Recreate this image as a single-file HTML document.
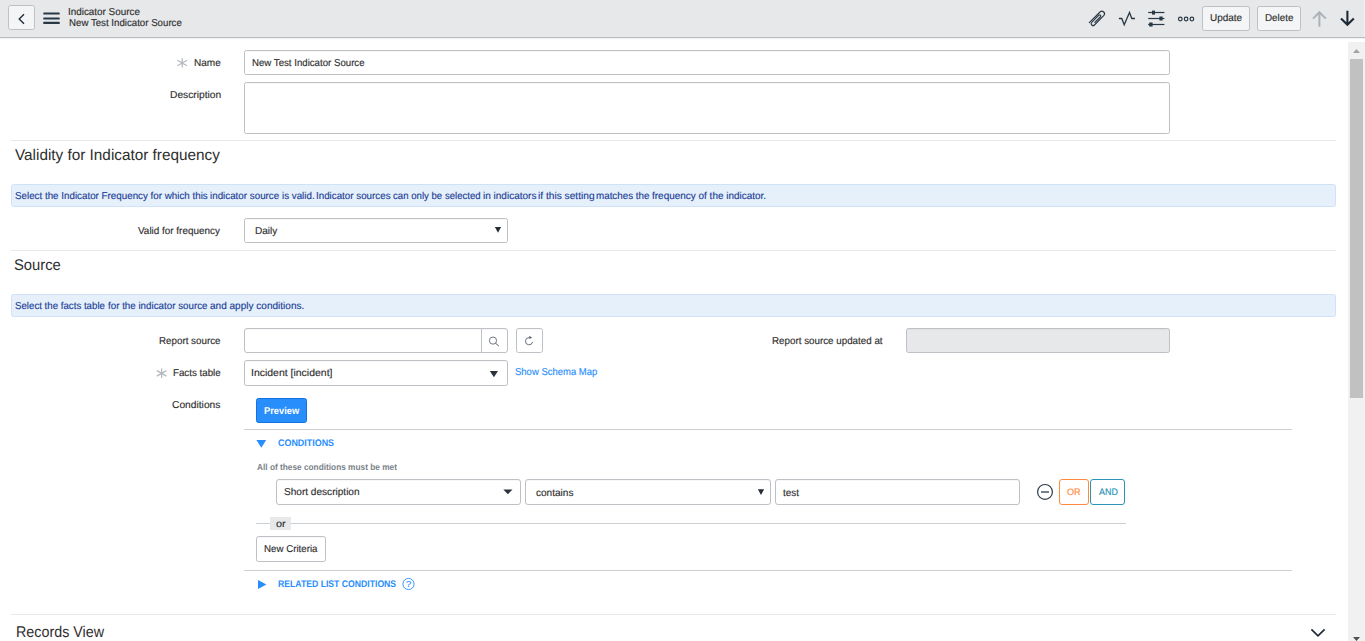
<!DOCTYPE html>
<html lang="en">
<head>
<meta charset="utf-8">
<title>Indicator Source | New Test Indicator Source</title>
<style>
html,body{margin:0;padding:0;}
body{position:relative;width:1365px;height:641px;overflow:hidden;background:#fff;font-family:"Liberation Sans",sans-serif;color:#2e2e2e;}
.t{position:absolute;text-rendering:geometricPrecision;white-space:pre;transform-origin:0 50%;display:block;}
.b{position:absolute;box-sizing:border-box;}
.hdr{left:0;top:0;width:1365px;height:38px;background:#e6e8ea;border-bottom:1px solid #b8bdc3;box-shadow:0 1px 1px rgba(0,0,0,.06);}
.btn{border:1px solid #bdc0c4;border-radius:2.5px;background:#f4f5f6;}
.inp{border:1px solid #bdc0c4;border-radius:2.5px;background:#fff;box-shadow:inset 0 1px 1px rgba(0,0,0,.035);}
.hr{height:1px;background:#e6e8ea;}
.hr2{height:1px;background:#cbd0d5;}
.info{border:1px solid #cfe2f8;border-radius:2.5px;background:#e6f0fa;}
svg{position:absolute;overflow:visible;}
.r{-webkit-text-stroke:.14px;}

</style>
</head>
<body>
<!-- header -->
<div class="b hdr"></div>
<div class="b" style="left:1364px;top:0;width:1px;height:37px;background:#eff0f2"></div>
<div class="b btn" style="left:8px;top:5px;width:27px;height:25px"></div>
<svg style="left:0;top:0" width="1365" height="38" viewBox="0 0 1365 38">
  <path d="M24 14.2 L19.2 19 L24 23.8" fill="none" stroke="#1f2f3f" stroke-width="1.4"/>
  <g fill="#293845">
    <rect x="43.3" y="12.4" width="16.4" height="2.2" rx=".5"/>
    <rect x="43.3" y="17.4" width="16.4" height="2.2" rx=".5"/>
    <rect x="43.3" y="21.8" width="16.4" height="2.2" rx=".5"/>
  </g>
</svg>
<div class="b btn" style="left:1202px;top:6px;width:48px;height:25px"></div>
<div class="b btn" style="left:1257px;top:6px;width:44px;height:25px"></div>

<!-- scrollbar -->
<div class="b" style="left:1348px;top:42px;width:17px;height:599px;background:#f1f1f1"></div>
<div class="b" style="left:1350px;top:59px;width:13px;height:339px;background:#c1c1c1"></div>
<svg style="left:1348px;top:42px" width="17" height="599" viewBox="0 0 17 599">
  <path d="M5 11 L8.5 7 L12 11 Z" fill="#a3a3a3"/>
  <path d="M5 595 L12 595 L8.5 599 Z" fill="#505050"/>
</svg>

<!-- form -->
<div class="b inp" style="left:244px;top:50px;width:926px;height:25px"></div>
<div class="b inp" style="left:244px;top:82px;width:926px;height:52px"></div>
<div class="b hr" style="left:11px;top:140px;width:1325px"></div>
<div class="b info" style="left:11px;top:184px;width:1325px;height:23px"></div>
<div class="b inp" style="left:244px;top:218px;width:264px;height:25px"></div>
<div class="b hr" style="left:11px;top:250px;width:1325px"></div>
<div class="b info" style="left:11px;top:294px;width:1325px;height:23px"></div>
<div class="b inp" style="left:244px;top:328px;width:238px;height:25px;border-radius:3px 0 0 3px"></div>
<div class="b inp" style="left:481px;top:328px;width:27px;height:25px;border-radius:0 3px 3px 0"></div>
<div class="b inp" style="left:516px;top:328px;width:27px;height:25px"></div>
<div class="b inp" style="left:906px;top:328px;width:264px;height:25px;background:#e6e8ea"></div>
<div class="b inp" style="left:244px;top:360px;width:264px;height:26px"></div>
<div class="b" style="left:256px;top:398px;width:51px;height:25px;border-radius:2.5px;background:#278efc;border:1px solid #1373e6"></div>
<div class="b hr2" style="left:244px;top:429px;width:1048px"></div>
<div class="b inp" style="left:276px;top:479px;width:245px;height:26px;border-radius:3px"></div>
<div class="b inp" style="left:525px;top:479px;width:246px;height:26px;border-radius:3px"></div>
<div class="b inp" style="left:775px;top:479px;width:245px;height:26px;border-radius:3px"></div>
<div class="b" style="left:1059px;top:479px;width:30px;height:26px;border:1px solid #ff8a3d;border-radius:3px;background:#fff"></div>
<div class="b" style="left:1090px;top:479px;width:35px;height:26px;border:1px solid #2a93b8;border-radius:3px;background:#fff"></div>
<div class="b hr2" style="left:256px;top:523px;width:870px"></div>
<div class="b" style="left:270px;top:517px;width:21px;height:13px;background:#e6e8ea"></div>
<div class="b inp" style="left:256px;top:536px;width:70px;height:26px"></div>
<div class="b hr2" style="left:244px;top:570px;width:1048px"></div>
<div class="b hr" style="left:11px;top:614px;width:1325px"></div>
<!-- icons -->
<svg style="left:0;top:0" width="1365" height="641" viewBox="0 0 1365 641">
  <!-- paperclip -->
  <g transform="translate(1097.4 18.3) rotate(45) scale(.9)" fill="none" stroke="#293845" stroke-width="1.25" stroke-linecap="round">
    <path d="M-2.9 9.8 V-7 A2.9 2.9 0 0 1 2.9 -7 V7.6 A2.1 2.1 0 0 1 -1.3 7.6 V-3.6 A1.25 1.25 0 0 1 1.2 -3.6 V5.2"/>
  </g>
  <!-- activity -->
  <path d="M1118.9 18.5 H1121.8 L1124.2 24.8 L1129.5 12.4 L1131.8 18.5 H1135" fill="none" stroke="#293845" stroke-width="1.3" stroke-linejoin="miter"/>
  <!-- sliders -->
  <g fill="#293845">
    <rect x="1148.2" y="11.9" width="16.2" height="1.2"/>
    <rect x="1148.2" y="17.9" width="16.2" height="1.2"/>
    <rect x="1148.2" y="23.9" width="16.2" height="1.2"/>
    <rect x="1152" y="10.6" width="3" height="4"/>
    <rect x="1159.4" y="16.5" width="3.2" height="4"/>
    <rect x="1149.2" y="22.5" width="3.4" height="4"/>
  </g>
  <!-- ooo -->
  <g fill="none" stroke="#293845" stroke-width="1.2">
    <circle cx="1180.3" cy="19" r="1.8"/>
    <circle cx="1186.1" cy="19" r="1.8"/>
    <circle cx="1191.9" cy="19" r="1.8"/>
  </g>
  <!-- up / down arrows -->
  <path d="M1319.4 26.7 V12.2 M1313 18.6 L1319.4 12.2 L1325.8 18.6" fill="none" stroke="#adb2b8" stroke-width="2"/>
  <path d="M1347.4 10.8 V24.8 M1341 18.4 L1347.4 24.8 L1353.8 18.4" fill="none" stroke="#1f2a37" stroke-width="2.1"/>

  <!-- mandatory asterisks -->
  <g stroke="#b4b9bf" stroke-width="1.25" fill="none">
    <path d="M182.2 58.2 V67.6 M177.4 60.2 L187 65.7 M187 60.2 L177.4 65.7"/>
    <path d="M161.6 368.6 V378 M156.8 370.6 L166.4 376.1 M166.4 370.6 L156.8 376.1"/>
  </g>

  <!-- select arrows -->
  <path d="M494.9 227.1 H501.1 L498 232.8 Z" fill="#262c36"/>
  <path d="M489.8 370.9 H498 L493.9 377.3 Z" fill="#2b333d"/>
  <path d="M503.3 489.4 H512.5 L507.9 494.2 Z" fill="#2b333d"/>
  <path d="M757.9 489.3 H764.1 L761 495 Z" fill="#262c36"/>

  <!-- search -->
  <circle cx="493" cy="340.6" r="3.6" fill="none" stroke="#56616c" stroke-width=".85"/>
  <path d="M495.5 343.2 L498.9 346.1" fill="none" stroke="#56616c" stroke-width="1"/>
  <!-- refresh -->
  <path d="M532.6 341.8 A3.6 3.6 0 1 1 529.2 337.6" fill="none" stroke="#56616c" stroke-width=".9"/>
  <path d="M529.4 336.1 L531.9 337.6 L529.4 339.1 Z" fill="#3a4652"/>

  <!-- condition triangles -->
  <path d="M256.4 440 H266.2 L261.3 447.8 Z" fill="#278efc"/>
  <path d="M258 580 L266.4 584.5 L258 589.1 Z" fill="#278efc"/>

  <!-- remove condition -->
  <circle cx="1045" cy="491.9" r="7.4" fill="none" stroke="#2e3d4d" stroke-width="1.2"/>
  <path d="M1041 492 H1049" stroke="#2e3d4d" stroke-width="1.3"/>

  <!-- help -->
  <circle cx="408.5" cy="584" r="5.6" fill="none" stroke="#278efc" stroke-width=".9"/>

  <!-- section chevron -->
  <path d="M1311.4 629.4 L1318 635.8 L1324.6 629.4" fill="none" stroke="#1f2a37" stroke-width="1.7"/>
</svg>

<span class="t r" style="left:68.14px;top:7.00px;font-size:10px;line-height:12px;font-weight:400;color:#2e2e2e;transform:scaleX(0.9874)">Indicator Source</span>
<span class="t r" style="left:68.65px;top:18.00px;font-size:10px;line-height:12px;font-weight:400;color:#2e2e2e;transform:scaleX(0.9683)">New Test Indicator Source</span>
<span class="t r" style="left:1210.35px;top:13.00px;font-size:10px;line-height:12px;font-weight:400;color:#2e2e2e;transform:scaleX(0.9968)">Update</span>
<span class="t r" style="left:1264.84px;top:13.00px;font-size:10px;line-height:12px;font-weight:400;color:#2e2e2e;transform:scaleX(0.9810)">Delete</span>
<span class="t r" style="left:193.72px;top:58.00px;font-size:10px;line-height:12px;font-weight:400;color:#2e2e2e;transform:scaleX(1.0049)">Name</span>
<span class="t r" style="left:252.15px;top:58.00px;font-size:10px;line-height:12px;font-weight:400;color:#2e2e2e;transform:scaleX(0.9657)">New Test Indicator Source</span>
<span class="t r" style="left:169.61px;top:90.00px;font-size:10px;line-height:12px;font-weight:400;color:#2e2e2e;transform:scaleX(1.0227)">Description</span>
<span class="t" style="left:14.68px;top:146.00px;font-size:15.5px;line-height:19px;font-weight:400;color:#2e2e2e;transform:scaleX(0.9878)">Validity for Indicator frequency</span>
<span class="t r" style="left:15.41px;top:191.00px;font-size:10px;line-height:12px;font-weight:400;color:#1b4098;transform:scaleX(0.9797)">Select the Indicator Frequency for which this</span>
<span class="t r" style="left:209.89px;top:191.00px;font-size:10px;line-height:12px;font-weight:400;color:#1b4098;transform:scaleX(0.9807)">indicator source is valid.</span>
<span class="t r" style="left:316.34px;top:191.00px;font-size:10px;line-height:12px;font-weight:400;color:#1b4098;transform:scaleX(0.9790)">Indicator sources</span>
<span class="t r" style="left:393.14px;top:191.00px;font-size:10px;line-height:12px;font-weight:400;color:#1b4098;transform:scaleX(0.9620)">can only be selected</span>
<span class="t r" style="left:482.87px;top:191.00px;font-size:10px;line-height:12px;font-weight:400;color:#1b4098;transform:scaleX(1.0005)">in indicators</span>
<span class="t r" style="left:538.16px;top:191.00px;font-size:10px;line-height:12px;font-weight:400;color:#1b4098;transform:scaleX(1.0189)">if this setting</span>
<span class="t r" style="left:596.09px;top:191.00px;font-size:10px;line-height:12px;font-weight:400;color:#1b4098;transform:scaleX(0.9817)">matches the</span>
<span class="t r" style="left:651.68px;top:191.00px;font-size:10px;line-height:12px;font-weight:400;color:#1b4098;transform:scaleX(0.9965)">frequency of the indicator.</span>
<span class="t r" style="left:138.38px;top:226.00px;font-size:10px;line-height:12px;font-weight:400;color:#2e2e2e;transform:scaleX(0.9903)">Valid for frequency</span>
<span class="t r" style="left:254.52px;top:226.00px;font-size:10px;line-height:12px;font-weight:400;color:#2e2e2e;transform:scaleX(1.0071)">Daily</span>
<span class="t" style="left:14.39px;top:256.00px;font-size:15.5px;line-height:19px;font-weight:400;color:#2e2e2e;transform:scaleX(0.9533)">Source</span>
<span class="t r" style="left:15.42px;top:301.00px;font-size:10px;line-height:12px;font-weight:400;color:#1b4098;transform:scaleX(0.9687)">Select the facts table</span>
<span class="t r" style="left:107.68px;top:301.00px;font-size:10px;line-height:12px;font-weight:400;color:#1b4098;transform:scaleX(0.9780)">for the indicator source</span>
<span class="t r" style="left:210.02px;top:301.00px;font-size:10px;line-height:12px;font-weight:400;color:#1b4098;transform:scaleX(1.0040)">and apply conditions.</span>
<span class="t r" style="left:159.14px;top:336.00px;font-size:10px;line-height:12px;font-weight:400;color:#2e2e2e;transform:scaleX(0.9789)">Report source</span>
<span class="t r" style="left:772.04px;top:336.00px;font-size:10px;line-height:12px;font-weight:400;color:#2e2e2e;transform:scaleX(0.9797)">Report source updated at</span>
<span class="t r" style="left:172.95px;top:368.00px;font-size:10px;line-height:12px;font-weight:400;color:#2e2e2e;transform:scaleX(0.9743)">Facts table</span>
<span class="t r" style="left:250.88px;top:368.00px;font-size:10px;line-height:12px;font-weight:400;color:#2e2e2e;transform:scaleX(1.0466)">Incident [incident]</span>
<span class="t r" style="left:515.13px;top:367.00px;font-size:10px;line-height:12px;font-weight:400;color:#278efc;transform:scaleX(0.9493)">Show Schema Map</span>
<span class="t r" style="left:172.19px;top:400.00px;font-size:10px;line-height:12px;font-weight:400;color:#2e2e2e;transform:scaleX(1.0243)">Conditions</span>
<span class="t" style="left:263.92px;top:406.00px;font-size:10px;line-height:12px;font-weight:700;color:#ffffff;transform:scaleX(0.9293)">Preview</span>
<span class="t" style="left:278.15px;top:438.00px;font-size:9.6px;line-height:12px;font-weight:700;color:#278efc;transform:scaleX(0.9311)">CONDITIONS</span>
<span class="t" style="left:256.57px;top:462.00px;font-size:8.9px;line-height:11px;font-weight:700;color:#7b838b;transform:scaleX(0.9333)">All of these conditions must be met</span>
<span class="t r" style="left:284.10px;top:487.00px;font-size:10px;line-height:12px;font-weight:400;color:#2e2e2e;transform:scaleX(1.0071)">Short description</span>
<span class="t r" style="left:536.42px;top:488.00px;font-size:10px;line-height:12px;font-weight:400;color:#2e2e2e;transform:scaleX(1.0055)">contains</span>
<span class="t r" style="left:783.08px;top:488.00px;font-size:10px;line-height:12px;font-weight:400;color:#2e2e2e;transform:scaleX(0.9953)">test</span>
<span class="t r" style="left:1067.21px;top:487.00px;font-size:9.3px;line-height:11px;font-weight:400;color:#ff8a3d;transform:scaleX(0.9769)">OR</span>
<span class="t r" style="left:1098.80px;top:487.00px;font-size:9.3px;line-height:11px;font-weight:400;color:#2a93b8;transform:scaleX(0.9621)">AND</span>
<span class="t r" style="left:276.19px;top:519.00px;font-size:10px;line-height:12px;font-weight:400;color:#2e2e2e;transform:scaleX(1.0866)">or</span>
<span class="t r" style="left:263.75px;top:544.00px;font-size:10px;line-height:12px;font-weight:400;color:#2e2e2e;transform:scaleX(0.9718)">New Criteria</span>
<span class="t" style="left:277.94px;top:579.00px;font-size:9.6px;line-height:12px;font-weight:700;color:#278efc;transform:scaleX(0.9023)">RELATED LIST CONDITIONS</span>
<span class="t r" style="left:405.89px;top:579.00px;font-size:8.5px;line-height:10px;font-weight:400;color:#278efc;transform:scaleX(1.1000)">?</span>
<span class="t" style="left:15.84px;top:623.00px;font-size:15.5px;line-height:19px;font-weight:400;color:#2e2e2e;transform:scaleX(0.9243)">Records View</span>
</body>
</html>
